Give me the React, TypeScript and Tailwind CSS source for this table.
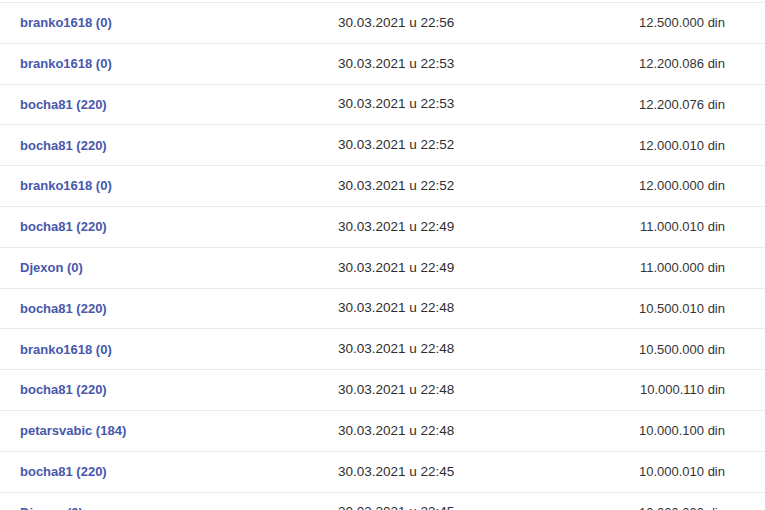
const rows: [string, string, string][] = [
  ["branko1618 (0)", "30.03.2021 u 22:56", "12.500.000 din"],
  ["branko1618 (0)", "30.03.2021 u 22:53", "12.200.086 din"],
  ["bocha81 (220)", "30.03.2021 u 22:53", "12.200.076 din"],
  ["bocha81 (220)", "30.03.2021 u 22:52", "12.000.010 din"],
  ["branko1618 (0)", "30.03.2021 u 22:52", "12.000.000 din"],
  ["bocha81 (220)", "30.03.2021 u 22:49", "11.000.010 din"],
  ["Djexon (0)", "30.03.2021 u 22:49", "11.000.000 din"],
  ["bocha81 (220)", "30.03.2021 u 22:48", "10.500.010 din"],
  ["branko1618 (0)", "30.03.2021 u 22:48", "10.500.000 din"],
  ["bocha81 (220)", "30.03.2021 u 22:48", "10.000.110 din"],
  ["petarsvabic (184)", "30.03.2021 u 22:48", "10.000.100 din"],
  ["bocha81 (220)", "30.03.2021 u 22:45", "10.000.010 din"],
  ["Djexon (0)", "30.03.2021 u 22:45", "10.000.000 din"],
]

export default function App() {
  return (
    <div className="w-[765px] h-[510px] overflow-hidden bg-white font-['Liberation_Sans',Arial,sans-serif]">
      <div className="mt-[2px] border-t border-[#ececec]">
        {rows.map(([user, date, amount], i) => (
          <div
            key={i}
            className="h-[40.8px] border-b border-[#ebebeb] flex items-center text-[13px] text-[#353535]"
          >
            <a className="w-[338px] pl-[20px] font-bold text-[#4757ad] cursor-pointer">{user}</a>
            <div className="w-[200px] text-[13.5px] text-[#2e2e2e]">{date}</div>
            <div className="w-[187px] text-right">{amount}</div>
          </div>
        ))}
      </div>
    </div>
  )
}
